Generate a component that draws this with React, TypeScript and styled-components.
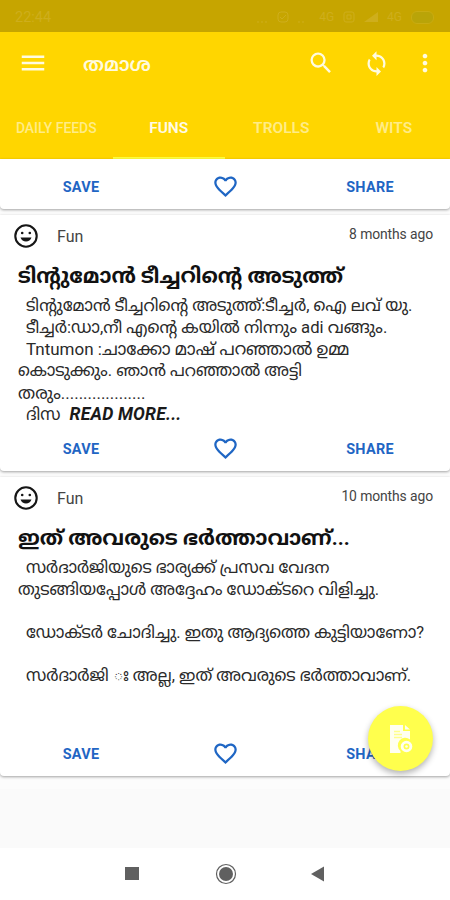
import React from 'react';
import styled, { createGlobalStyle } from 'styled-components';
import { MdMenu, MdSearch, MdLoop, MdMoreVert, MdFavoriteBorder } from 'react-icons/md';

const GlobalStyle = createGlobalStyle`
  * { box-sizing: border-box; }
  body { margin: 0; background: #fff; }
`;

const Screen = styled.div`
  position: relative;
  width: 450px;
  height: 900px;
  overflow: hidden;
  display: flex;
  flex-direction: column;
  background: #fff;
  font-family: Roboto, 'Noto Sans Malayalam', 'Noto Sans', sans-serif;
  color: #111;
`;

const StatusBar = styled.div`
  height: 32px;
  flex: none;
  display: flex;
  align-items: center;
  justify-content: space-between;
  padding: 2px 16px 0 15px;
  background: #c6a500;
  color: #ceae1c;
  font-size: 14.5px;
`;

const StatusIcons = styled.div`
  display: flex;
  align-items: center;
  gap: 9px;
  font-size: 12px;
`;

const Battery = styled.span`
  width: 23px;
  height: 13px;
  border-radius: 6px;
  border: 1px solid #c9ac12;
  background: #b9a408;
`;

const AppBar = styled.header`
  height: 64px;
  flex: none;
  display: flex;
  align-items: center;
  background: #ffd600;
  color: #fffbe0;
  padding: 0 11px 2px 18px;
`;

const AppTitle = styled.h1`
  flex: 1;
  margin: 3px 0 0 35px;
  font-size: 19.3px;
  line-height: 28px;
  font-weight: 600;
  white-space: nowrap;
`;

const BarActions = styled.div`
  display: flex;
  align-items: center;
  gap: 28px;

  svg:last-child {
    margin-left: -7px;
  }
`;

const Tabs = styled.nav`
  height: 63px;
  flex: none;
  display: grid;
  grid-template-columns: repeat(4, 1fr);
  background: #ffd600;
`;

const Tab = styled.div<{ $active?: boolean; $small?: boolean }>`
  display: flex;
  align-items: center;
  justify-content: center;
  padding-top: 3px;
  border-bottom: 2px solid ${p => (p.$active ? '#ffff3c' : '#ffd600')};
  font-size: ${p => (p.$small ? 13.9 : 15.5)}px;
  font-weight: ${p => (p.$small ? 500 : 600)};
  white-space: nowrap;
  color: ${p => (p.$active ? '#fffbe6' : '#ffec87')};
`;

const Feed = styled.main`
  height: 630px;
  flex: none;
  background: #fcfcfc;
`;

const Card = styled.article<{ $height: number; $gap: number }>`
  height: ${p => p.$height}px;
  margin-bottom: ${p => p.$gap}px;
  display: flex;
  flex-direction: column;
  background: #fff;
  border-radius: 0 0 4px 4px;
  box-shadow: 0 1px 3px rgba(0, 0, 0, 0.36);
`;

const CardHead = styled.div`
  height: 42px;
  flex: none;
  display: flex;
  align-items: center;
  padding: 0 17px 0 13px;
`;

const Category = styled.span`
  flex: 1;
  margin-left: 18px;
  font-size: 16px;
  color: #444;
`;

const Age = styled.time`
  font-size: 13.9px;
  letter-spacing: -0.1px;
  color: #444;
  padding-bottom: 4px;
`;

const CardTitle = styled.h2<{ $size: number }>`
  margin: 0 0 0 18px;
  height: 37px;
  flex: none;
  line-height: 38px;
  font-size: ${p => p.$size}px;
  font-weight: 700;
  white-space: nowrap;
  color: #111;
`;

const Body = styled.div`
  flex: 1 1 0;
  min-height: 0;
  padding: 1px 0 0 18px;
`;

const Line = styled.p<{ $indent?: boolean; $size: number }>`
  margin: 0;
  height: 21.7px;
  line-height: 22.5px;
  padding-left: ${p => (p.$indent ? 8 : 0)}px;
  font-size: ${p => p.$size}px;
  white-space: nowrap;
  color: #2a2a2a;
`;

const ReadMore = styled.em`
  margin-left: 9px;
  font-size: 17.6px;
  font-weight: 700;
  letter-spacing: 0.2px;
  color: #1a1a1a;
`;

const Actions = styled.div`
  height: 50px;
  flex: none;
  display: grid;
  grid-template-columns: 162px 126px 1fr;
  place-items: center;
  padding-top: 5px;
  color: #1f66c4;
  font-size: 14.4px;
  font-weight: 700;
  letter-spacing: 0.3px;
`;

const ActionLabel = styled.span<{ $shift?: number }>`
  margin: 2px 0 0 ${p => p.$shift || 0}px;
`;

const Spacer = styled.div`
  height: 59px;
  flex: none;
  background: #fafafa;
`;

const NavBar = styled.footer`
  flex: 1;
  display: flex;
  align-items: center;
  padding-left: 125px;
`;

const Fab = styled.button`
  position: absolute;
  left: 368px;
  top: 706px;
  width: 65px;
  height: 65px;
  border: 0;
  padding: 0;
  border-radius: 50%;
  display: grid;
  place-items: center;
  background: #ffff4d;
  box-shadow: 0 3px 6px rgba(0, 0, 0, 0.3);
`;

const Smile = () => (
  <svg width="26" height="26" viewBox="0 0 26 26" fill="none" stroke="#161616">
    <circle cx="13" cy="13" r="10.7" strokeWidth="2.1" />
    <circle cx="9.2" cy="10" r="1.3" fill="#161616" stroke="none" />
    <circle cx="16.8" cy="10" r="1.3" fill="#161616" stroke="none" />
    <path d="M7.5 14.500h11c-.9 2.700-3 4.100-5.500 4.100s-4.600-1.400-5.500-4.100z" fill="#161616" stroke="none" />
  </svg>
);

const CardActions = () => (
  <Actions>
    <ActionLabel>SAVE</ActionLabel>
    <MdFavoriteBorder size={27} />
    <ActionLabel $shift={2}>SHARE</ActionLabel>
  </Actions>
);

type TextLine = { text: string; indent?: boolean; size: number; more?: boolean };
type Post = { age: string; title: string; titleSize: number; height: number; gap: number; lines: TextLine[] };

const posts: Post[] = [
  {
    age: '8 months ago',
    title: 'ടിന്റുമോൻ ടീച്ചറിന്റെ അടുത്ത്',
    titleSize: 20.7,
    height: 256,
    gap: 6,
    lines: [
      { text: 'ടിന്റുമോൻ ടീച്ചറിന്റെ അടുത്ത്:ടീച്ചർ, ഐ ലവ് യു.', indent: true, size: 16.65 },
      { text: 'ടീച്ചർ:ഡാ,നീ എന്റെ കയിൽ നിന്നും adi വങ്ങും.', indent: true, size: 16.7 },
      { text: 'Tntumon :ചാക്കോ മാഷ് പറഞ്ഞാൽ ഉമ്മ', indent: true, size: 17 },
      { text: 'കൊടുക്കും. ഞാൻ പറഞ്ഞാൽ അട്ടി', size: 16.5 },
      { text: 'തരും...................', size: 16.9 },
      { text: 'ദിസ', indent: true, size: 16.5, more: true },
    ],
  },
  {
    age: '10 months ago',
    title: 'ഇത് അവരുടെ ഭർത്താവാണ്...',
    titleSize: 20.6,
    height: 299,
    gap: 0,
    lines: [
      { text: 'സർദാർജിയുടെ ഭാര്യക്ക് പ്രസവ വേദന', indent: true, size: 16.45 },
      { text: 'തുടങ്ങിയപ്പോൾ അദ്ദേഹം ഡോക്ടറെ വിളിച്ചു.', size: 16.5 },
      { text: '', size: 16.5 },
      { text: 'ഡോക്ടർ ചോദിച്ചു. ഇതു ആദ്യത്തെ കുട്ടിയാണോ?', indent: true, size: 16.55 },
      { text: '', size: 16.5 },
      { text: 'സർദാർജി ഃ അല്ല, ഇത് അവരുടെ ഭർത്താവാണ്.', indent: true, size: 16.55 },
    ],
  },
];

export default function App() {
  return (
    <Screen>
      <GlobalStyle />
      <StatusBar>
        <span>22:44</span>
        <StatusIcons>
          <svg width="54" height="14" viewBox="0 0 54 14" fill="none" stroke="currentColor">
            <path d="M1 12h2M5 12h2M9 12h2M42 12h2M46 12h2" />
            <rect x="22" y="2" width="10" height="10" rx="3" />
            <path d="M24 7l2 2 4-4" />
          </svg>
          <span>4G</span>
          <svg width="12" height="12" viewBox="0 0 12 12" fill="none" stroke="currentColor">
            <rect x="1" y="1" width="10" height="10" rx="2" />
            <path d="M4 4h4v4H4z" />
          </svg>
          <svg width="14" height="12" viewBox="0 0 14 12" fill="currentColor">
            <path d="M0 11L14 1v10z" />
          </svg>
          <span>4G</span>
          <Battery />
        </StatusIcons>
      </StatusBar>
      <AppBar>
        <MdMenu size={30} />
        <AppTitle>തമാശ</AppTitle>
        <BarActions>
          <MdSearch size={28} />
          <MdLoop size={27} />
          <MdMoreVert size={28} />
        </BarActions>
      </AppBar>
      <Tabs>
        <Tab $small>DAILY FEEDS</Tab>
        <Tab $active>FUNS</Tab>
        <Tab>TROLLS</Tab>
        <Tab>WITS</Tab>
      </Tabs>
      <Feed>
        <Card $height={50} $gap={6}>
          <CardActions />
        </Card>
        {posts.map(post => (
          <Card key={post.title} $height={post.height} $gap={post.gap}>
            <CardHead>
              <Smile />
              <Category>Fun</Category>
              <Age>{post.age}</Age>
            </CardHead>
            <CardTitle $size={post.titleSize}>{post.title}</CardTitle>
            <Body>
              {post.lines.map((line, i) => (
                <Line key={i} $indent={line.indent} $size={line.size}>
                  {line.text}
                  {line.more && <ReadMore>READ MORE...</ReadMore>}
                </Line>
              ))}
            </Body>
            <CardActions />
          </Card>
        ))}
      </Feed>
      <Spacer />
      <NavBar>
        <svg width="202" height="24" viewBox="0 0 202 24" fill="#606060">
          <rect x="0" y="5" width="14" height="13" />
          <circle cx="101" cy="12" r="7" />
          <circle cx="101" cy="12" r="9.500" fill="none" stroke="#606060" strokeWidth="1.2" />
          <path d="M186 12l13-7.500v15z" />
        </svg>
      </NavBar>
      <Fab aria-label="Add post">
        <svg width="26" height="30" viewBox="0 0 26 30" fill="#fffff0">
          <path d="M2 1h13v6h7v8.500a6.800 6.800 0 0 0-9.500 11.500v2H2z" />
          <path d="M17 1l5 4.500h-5z" />
          <path d="M6 7.500h6M6 10.500h8M6 13.500h8" stroke="#ffff8c" strokeWidth="1.600" />
          <circle cx="18.500" cy="22.500" r="4.400" fill="none" stroke="#fffff0" strokeWidth="2.800" />
          <circle cx="18.500" cy="22.500" r="1.300" />
        </svg>
      </Fab>
    </Screen>
  );
}
